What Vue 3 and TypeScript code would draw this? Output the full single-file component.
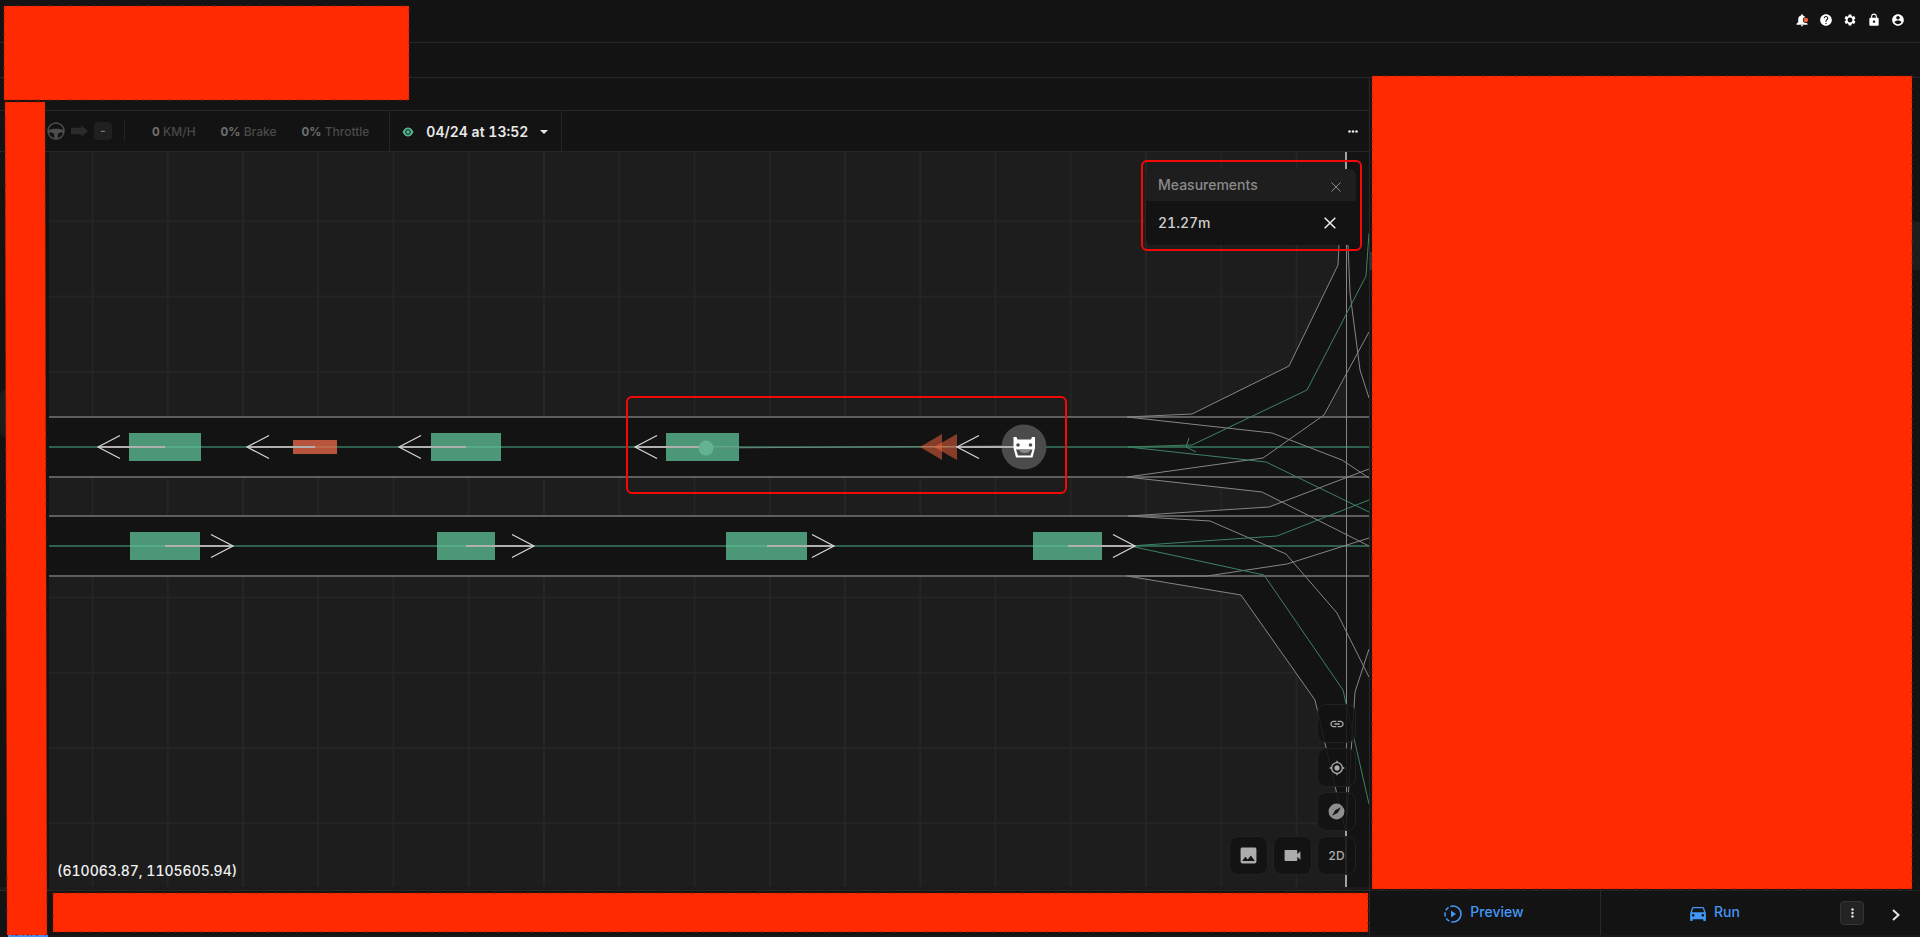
<script setup lang="ts">
interface Vehicle {
  x: number
  y: number
  width: number
  height: number
  kind: 'car' | 'cone'
  from: number
  tip: number
}

interface IconDef {
  name: string
  path: string
}

const step = 75.25
const columns: number[] = Array.from({ length: 17 }, (_, i) => 92.5 + i * step)
const rows: number[] = Array.from({ length: 9 }, (_, i) => 221.25 + i * step)

const vehicles: Vehicle[] = [
  { x: 129, y: 433, width: 72, height: 28, kind: 'car', from: 165, tip: 98 },
  { x: 293, y: 440, width: 44, height: 14, kind: 'cone', from: 315, tip: 247 },
  { x: 431, y: 433, width: 70, height: 28, kind: 'car', from: 466, tip: 399 },
  { x: 666, y: 433, width: 73, height: 28, kind: 'car', from: 702, tip: 635 },
  { x: 130, y: 532, width: 70, height: 28, kind: 'car', from: 165, tip: 233 },
  { x: 437, y: 532, width: 58, height: 28, kind: 'car', from: 466, tip: 534 },
  { x: 726, y: 532, width: 81, height: 28, kind: 'car', from: 767, tip: 834 },
  { x: 1033, y: 532, width: 69, height: 28, kind: 'car', from: 1068, tip: 1135 },
]

const arrow = (from: number, tip: number, y: number): string => {
  const back = tip < from ? tip + 22 : tip - 22
  return `M${back} ${y - 11.5}L${tip} ${y}L${back} ${y + 11.5}`
}

const laneEdges: string[] = [
  '1127,417 1192,414 1289,366 1338,265 1339,245 1343,170',
  '1127,417 1272,433 1342,460 1369,478',
  '1127,477 1263,458 1324,415 1369,332',
  '1127,477 1262,492 1369,546',
  '1128,516 1269,507 1369,469',
  '1128,516 1210,521 1286,554 1337,613 1369,677',
  '1127,576 1207,576 1287,564 1369,538',
  '1127,576 1241,595 1315,700 1345,829',
  '1347,170 1348,245 1350,293 1360,370 1369,398',
  '1369,649 1355,692 1346,830',
]

const laneCenters: string[] = [
  '1369,233 1366,276 1307,390 1192,445 1128,447',
  '1128,447 1266,462 1369,512',
  '1130,546 1277,536 1369,500',
  '1130,546 1264,575 1343,690 1369,804',
]

const account: IconDef[] = [
  { name: 'Help', path: 'M12 2C6.48 2 2 6.48 2 12s4.48 10 10 10 10-4.48 10-10S17.52 2 12 2zm1 17h-2v-2h2v2zm2.07-7.75l-.9.92C13.45 12.9 13 13.5 13 15h-2v-.5c0-1.1.45-2.1 1.17-2.83l1.24-1.26c.37-.36.59-.86.59-1.41 0-1.1-.9-2-2-2s-2 .9-2 2H8c0-2.21 1.79-4 4-4s4 1.79 4 4c0 .88-.36 1.68-.93 2.25z' },
  { name: 'Settings', path: 'M19.14 12.94c.04-.3.06-.61.06-.94 0-.32-.02-.64-.07-.94l2.03-1.58c.18-.14.23-.41.12-.61l-1.92-3.32c-.12-.22-.37-.29-.59-.22l-2.39.96c-.5-.38-1.03-.7-1.62-.94l-.36-2.54c-.04-.24-.24-.41-.48-.41h-3.84c-.24 0-.43.17-.47.41l-.36 2.54c-.59.24-1.13.57-1.62.94l-2.39-.96c-.22-.08-.47 0-.59.22L2.74 8.87c-.12.21-.08.47.12.61l2.03 1.58c-.05.3-.09.63-.09.94s.02.64.07.94l-2.03 1.58c-.18.14-.23.41-.12.61l1.92 3.32c.12.22.37.29.59.22l2.39-.96c.5.38 1.03.7 1.62.94l.36 2.54c.05.24.24.41.48.41h3.84c.24 0 .44-.17.47-.41l.36-2.54c.59-.24 1.13-.56 1.62-.94l2.39.96c.22.08.47 0 .59-.22l1.92-3.32c.12-.22.07-.47-.12-.61l-2.01-1.58zM12 16.2A4.2 4.2 0 1 1 12 7.8a4.2 4.2 0 0 1 0 8.4z' },
  { name: 'Lock', path: 'M18 8h-1V6c0-2.76-2.24-5-5-5S7 3.24 7 6v2H6c-1.1 0-2 .9-2 2v10c0 1.1.9 2 2 2h12c1.1 0 2-.9 2-2V10c0-1.1-.9-2-2-2zm-6 9c-1.1 0-2-.9-2-2s.9-2 2-2 2 .9 2 2-.9 2-2 2zm3.1-9H8.9V6c0-1.71 1.39-3.1 3.1-3.1s3.1 1.39 3.1 3.1v2z' },
  { name: 'Account', path: 'M12 2C6.48 2 2 6.48 2 12s4.48 10 10 10 10-4.48 10-10S17.52 2 12 2zm0 3c1.66 0 3 1.34 3 3s-1.34 3-3 3-3-1.34-3-3 1.34-3 3-3zm0 14.2c-2.5 0-4.71-1.28-6-3.22.03-1.99 4-3.08 6-3.08 1.99 0 5.97 1.09 6 3.08-1.29 1.94-3.5 3.22-6 3.22z' },
]

const stack: IconDef[] = [
  { name: 'Link', path: 'M3.9 12c0-1.71 1.39-3.1 3.1-3.1h4V7H7c-2.76 0-5 2.24-5 5s2.24 5 5 5h4v-1.9H7c-1.71 0-3.1-1.39-3.1-3.1zM8 13h8v-2H8v2zm9-6h-4v1.9h4c1.71 0 3.1 1.39 3.1 3.1s-1.39 3.1-3.1 3.1h-4V17h4c2.76 0 5-2.24 5-5s-2.24-5-5-5z' },
  { name: 'Center on vehicle', path: 'M12 8c-2.21 0-4 1.79-4 4s1.79 4 4 4 4-1.79 4-4-1.79-4-4-4zm8.94 3c-.46-4.17-3.77-7.48-7.94-7.94V1h-2v2.06C6.83 3.52 3.52 6.83 3.06 11H1v2h2.06c.46 4.17 3.77 7.48 7.94 7.94V23h2v-2.06c4.17-.46 7.48-3.77 7.94-7.94H23v-2h-2.06zM12 19c-3.87 0-7-3.13-7-7s3.13-7 7-7 7 3.13 7 7-3.13 7-7 7z' },
]
</script>

<template>
  <div class="app">
    <header class="topbar">
      <button class="plain" type="button" aria-label="Notifications">
        <svg class="icon-sm" viewBox="0 0 24 24"><path d="M12 23c1.1 0 2-.9 2-2h-4c0 1.1.9 2 2 2zm6.500-7V10.500c0-3.100-1.900-5.600-5-6.300V3.500a1.500 1.500 0 0 0-3 0v.7c-3.100.7-5 3.200-5 6.300V16L2.500 18.500V20h19v-1.500z" /><circle cx="18.500" cy="12" r="5" fill="#131313" /><circle cx="18.500" cy="12" r="4" class="alert" /></svg>
      </button>
      <button v-for="icon in account" :key="icon.name" class="plain" type="button" :aria-label="icon.name">
        <svg class="icon-sm" viewBox="0 0 24 24"><path fill-rule="evenodd" :d="icon.path" /></svg>
      </button>
    </header>
    <div class="subbar"></div>
    <svg class="mask mask-top"><rect width="100%" height="100%" class="mask-fill" /></svg>

    <main class="main">
      <section class="workspace">
        <div class="menubar"></div>
        <div class="toolbar">
          <div class="drive">
            <svg class="wheel" viewBox="0 0 18 18">
              <circle cx="9" cy="9" r="8" fill="none" stroke="currentColor" stroke-width="1.500" />
              <path d="M1 8.500C4 6.200 14 6.200 17 8.500L16.500 11C13 10 11 11 10.700 13V17H7.300V13C7 11 5 10 1.500 11Z" fill="currentColor" />
            </svg>
            <svg class="gear-arrow" viewBox="0 0 18 12"><path d="M0 2.500h11V0l7 6-7 6V9.500H0z" fill="#2b2b2b" /></svg>
            <span class="gear">-</span>
          </div>
          <div class="stats">
            <span><b>0</b> KM/H</span>
            <span><b>0%</b> Brake</span>
            <span><b>0%</b> Throttle</span>
          </div>
          <button class="version" type="button">
            <svg class="eye" viewBox="0 0 12 10"><path d="M0.500 5C2 1.700 4 .5 6 .5S10 1.700 11.500 5C10 8.300 8 9.500 6 9.500S2 8.300.5 5z" fill="#54b890" /><circle cx="6" cy="5" r="2.300" fill="none" stroke="#131313" stroke-width="1" /></svg>
            <span>04/24 at 13:52</span>
            <svg class="caret" viewBox="0 0 8 4"><path d="M0 0h8L4 4z" fill="#e8e8e8" /></svg>
          </button>
          <button class="plain more" type="button" aria-label="More">
            <svg class="dots" viewBox="0 0 10 3"><circle cx="1.500" cy="1.500" r="1.300" /><circle cx="5" cy="1.500" r="1.300" /><circle cx="8.500" cy="1.500" r="1.300" /></svg>
          </button>
        </div>

        <div class="stage">
          <div class="rail"></div>
          <div class="map">
            <svg class="canvas" viewBox="49 152 1320 735" preserveAspectRatio="xMinYMin slice">
              <g class="grid">
                <line v-for="x in columns" :key="'c' + x" :x1="x" :x2="x" y1="152" y2="887" />
                <line v-for="y in rows" :key="'r' + y" x1="48" x2="1369" :y1="y" :y2="y" />
              </g>
              <g class="road">
                <rect x="48" y="417" width="1080" height="60" />
                <rect x="48" y="516" width="1080" height="60" />
                <path fill-rule="evenodd" d="M1127 417L1192 414L1289 366L1338 265L1339 245L1346 170V152H1369V887H1346V829L1315 700L1241 595L1127 576V516L1269 507L1282 502L1262 492L1127 477ZM1325 415.500L1346 376V417H1325Z" />
              </g>
              <g class="edge">
                <line v-for="y in [417, 477, 516, 576]" :key="y" x1="48" x2="1369" :y1="y" :y2="y" />
              </g>
              <g class="center">
                <line x1="48" x2="1369" y1="447" y2="447" />
                <line x1="48" x2="1369" y1="546" y2="546" />
              </g>
              <g class="lane-edge">
                <polyline v-for="points in laneEdges" :key="points" :points="points" />
                <line x1="1346.500" x2="1346.500" y1="152" y2="887" />
              </g>
              <g class="lane-end">
                <line x1="1346" x2="1346" y1="152" y2="170" />
                <line x1="1346" x2="1346" y1="829" y2="887" />
              </g>
              <g class="lane-center">
                <polyline v-for="points in laneCenters" :key="points" :points="points" />
                <polyline points="1189,438 1186,447 1196,452" />
              </g>

              <g v-for="v in vehicles" :key="v.x + '-' + v.y">
                <rect :x="v.x" :y="v.y" :width="v.width" :height="v.height" :class="v.kind" />
                <line :x1="v.x" :x2="v.x + v.width" :y1="v.y + v.height / 2" :y2="v.y + v.height / 2" class="inner" :class="v.kind + '-line'" />
                <line :x1="v.from" :x2="v.tip" :y1="v.y + v.height / 2" :y2="v.y + v.height / 2" class="heading" />
                <path :d="arrow(v.from, v.tip, v.y + v.height / 2)" class="head" />
              </g>

              <line x1="706" y1="448" x2="1024" y2="446" class="measure" />
              <circle cx="706" cy="448" r="7.500" fill="#65b292" />
              <circle cx="1024" cy="447" r="22.500" fill="#4b4b4b" />
              <path d="M920 447L942 434V460Z" class="wedge" />
              <path d="M934 447L957 434V460Z" class="wedge" />
              <line x1="1024" x2="957" y1="447" y2="447" class="heading" />
              <path :d="arrow(1024, 957, 447)" class="head" />
              <path fill-rule="evenodd" fill="#fff" d="M1013.500 437h3l1 2.500h13.500l1-2.500h3v11l-2.500 9.500h-16.500l-2.500-9.500zM1016 449.500l2 6h12.500l2-6z" />
              <path d="M1019 449.500h11.500a6 5 0 0 1-11.500 0z" fill="#8b8b8b" />
              <circle cx="1018" cy="445" r="1.800" fill="#4b4b4b" />
              <circle cx="1030.500" cy="445" r="1.800" fill="#4b4b4b" />
              <rect x="627" y="397" width="439" height="96" rx="5" class="callout" />
            </svg>

            <div class="marked">
              <section class="panel">
                <div class="panel-head">
                  <span>Measurements</span>
                  <button class="plain" type="button" aria-label="Close measurements"><svg class="close-sm" viewBox="0 0 10 10"><path d="M.5.5l9 9M9.500.5l-9 9" /></svg></button>
                </div>
                <div class="panel-row">
                  <span>21.27m</span>
                  <button class="plain" type="button" aria-label="Remove measurement"><svg class="close-md" viewBox="0 0 12 12"><path d="M.7.7l10.600 10.600M11.300.7L.7 11.300" /></svg></button>
                </div>
              </section>
            </div>

            <div class="coords">(610063.87, 1105605.94)</div>

            <div class="controls">
              <button v-for="icon in stack" :key="icon.name" class="tile" type="button" :aria-label="icon.name">
                <svg class="icon-md" viewBox="0 0 24 24"><path :d="icon.path" /></svg>
              </button>
              <button class="tile" type="button" aria-label="Compass">
                <svg class="icon-lg" viewBox="0 0 24 24"><circle cx="12" cy="12" r="10" fill="#8f8f8f" /><path d="M17.500 6.500L13.700 13.700 6.500 17.500 10.300 10.300z" fill="#151515" /></svg>
              </button>
              <div class="tile-row">
                <button class="tile" type="button" aria-label="Image">
                  <svg class="icon-lg" viewBox="0 0 24 24"><path fill-rule="evenodd" d="M22 20V4c0-1.100-.9-2-2-2H4c-1.100 0-2 .9-2 2v16c0 1.100.9 2 2 2h16c1.100 0 2-.9 2-2zM8 13.500l3 3.500 4-5 5 7H4z" /></svg>
                </button>
                <button class="tile" type="button" aria-label="Camera">
                  <svg class="icon-lg" viewBox="0 0 24 24"><path d="M18 10.500V6c0-.55-.45-1-1-1H3c-.55 0-1 .45-1 1v12c0 .55.45 1 1 1h14c.55 0 1-.45 1-1v-4.500l4 4v-11z" /></svg>
                </button>
                <button class="tile" type="button">2D</button>
              </div>
            </div>
          </div>
        </div>
        <div class="timeline">
          <svg class="mask mask-timeline"><rect width="100%" height="100%" class="mask-fill" /></svg>
        </div>
        <span class="rail-tab"></span>
        <svg class="mask mask-rail" viewBox="0 0 42 833" preserveAspectRatio="none"><polygon points="0,0 40,0 42,833 2,833" class="mask-fill" /></svg>
      </section>

      <aside class="side">
        <span class="resize-handle"></span>
        <span class="side-track"></span>
        <svg class="mask mask-side"><rect width="100%" height="100%" class="mask-fill" /></svg>
        <div class="actions">
          <button class="action preview" type="button">
            <svg class="play" viewBox="0 0 18 18"><circle cx="9" cy="9" r="8" fill="none" stroke="#4397f7" stroke-width="1.600" stroke-dasharray="26 2 4.200 2 4.200 2 4.200 2 3.600" transform="rotate(-85 9 9)" /><path d="M7 5.500L12 9L7 12.500Z" /></svg>
            <span>Preview</span>
          </button>
          <button class="action run" type="button">
            <svg class="car-icon" viewBox="3 5 18 16"><path fill-rule="evenodd" d="M18.92 6.01C18.72 5.42 18.16 5 17.5 5h-11c-.66 0-1.21.42-1.42 1.01L3 12v8c0 .55.45 1 1 1h1c.55 0 1-.45 1-1v-1h12v1c0 .55.45 1 1 1h1c.55 0 1-.45 1-1v-8l-2.08-5.99zM6.5 16c-.83 0-1.5-.67-1.5-1.5S5.67 13 6.5 13s1.5.67 1.5 1.5S7.33 16 6.5 16zm11 0c-.83 0-1.5-.67-1.5-1.5s.67-1.5 1.5-1.5 1.5.67 1.5 1.5-.67 1.5-1.5 1.5zM5 11l1.500-4.500h11L19 11H5z" /></svg>
            <span>Run</span>
          </button>
          <button class="kebab" type="button" aria-label="Run options">
            <svg viewBox="0 0 3 10"><circle cx="1.500" cy="1.500" r="1.200" /><circle cx="1.500" cy="5" r="1.200" /><circle cx="1.500" cy="8.500" r="1.200" /></svg>
          </button>
          <button class="plain next" type="button" aria-label="Next">
            <svg viewBox="0 0 8 12"><path d="M1 1l5.500 5L1 11" fill="none" stroke="#e4e4e4" stroke-width="2" /></svg>
          </button>
        </div>
      </aside>
    </main>
    <footer class="base"><span class="base-tab"></span></footer>
  </div>
</template>

<style>
body {
  margin: 0;
  background: #131313;
}
</style>

<style scoped>
.app {
  position: relative;
  display: flex;
  flex-direction: column;
  min-height: 100vh;
  box-sizing: border-box;
  background: #131313;
  color: #e8e8e8;
  font: 14px/20px Inter, "Liberation Sans", sans-serif;
  font-variant-numeric: tabular-nums;
}
.app * {
  box-sizing: border-box;
}
svg {
  display: block;
  fill: currentColor;
}
button {
  font: inherit;
  font-variant-numeric: tabular-nums;
  color: inherit;
  cursor: pointer;
}
.plain {
  padding: 0;
  border: 0;
  background: none;
}
.topbar {
  display: flex;
  align-items: center;
  justify-content: flex-end;
  gap: 10px;
  height: 43px;
  padding: 0 15px 2px 0;
  border-bottom: 1px solid #262626;
  color: #fff;
}
.icon-sm {
  width: 14px;
  height: 14px;
}
.alert {
  fill: #f2643d;
}
.subbar {
  height: 35px;
  border-bottom: 1px solid #262626;
}
.mask {
  overflow: visible;
}
.mask-fill {
  fill: #ff2a00;
  stroke: #8a1c06;
  stroke-width: 1;
  stroke-dasharray: 2 3 1 5 3 2 1 7 2 4 1 2;
}
.mask-top {
  position: absolute;
  z-index: 2;
  top: 6px;
  left: 4px;
  width: 405px;
  height: 94px;
}
.main {
  display: flex;
  flex: 1;
}
.workspace {
  position: relative;
  display: flex;
  flex: 1;
  flex-direction: column;
  min-width: 0;
}
.menubar {
  height: 33px;
  border-bottom: 1px solid #262626;
}
.toolbar {
  display: flex;
  align-items: center;
  height: 41px;
  padding-left: 47px;
  border-bottom: 1px solid #262626;
}
.drive {
  display: flex;
  align-items: center;
  gap: 6px;
  height: 20px;
  padding-right: 12px;
  border-right: 1px solid #242424;
  color: #4d4d4d;
}
.wheel {
  width: 18px;
  height: 18px;
}
.gear-arrow {
  width: 17px;
  height: 12px;
}
.gear {
  width: 18px;
  height: 18px;
  border-radius: 4px;
  background: #202020;
  color: #777;
  font-size: 12px;
  font-weight: 600;
  line-height: 18px;
  text-align: center;
}
.stats {
  display: flex;
  gap: 25px;
  padding: 1px 20px 0 27px;
  color: #4a4a4a;
  font-size: 12px;
  font-weight: 500;
}
.stats b {
  color: #6e6e6e;
  font-weight: 700;
}
.version {
  display: flex;
  align-items: center;
  gap: 12px;
  height: 40px;
  padding: 1px 13px 0 12px;
  border: solid #262626;
  border-width: 0 1px;
  background: none;
  color: #e8e8e8;
  font-weight: 600;
}
.eye {
  width: 12px;
  height: 10px;
}
.caret {
  width: 8px;
  height: 4px;
}
.more {
  margin-left: auto;
  padding: 8px 11px;
}
.dots {
  width: 10px;
  height: 3px;
}
.stage {
  display: flex;
  flex: 1;
}
.rail {
  width: 49px;
}
.rail-tab {
  position: absolute;
  top: 312px;
  left: 0;
  width: 6px;
  height: 47px;
  border-radius: 6px 0 0 6px;
  background: #1d1d1d;
}
.map {
  position: relative;
  flex: 1;
  overflow: hidden;
  background: #1d1d1d;
}
.canvas {
  position: absolute;
  inset: 0;
  width: 100%;
  height: 100%;
}
.grid line {
  stroke: #252525;
  stroke-width: 2;
}
.road {
  fill: #131313;
}
.edge line {
  stroke: #5e5e5e;
  stroke-width: 2;
}
.center line {
  stroke: #2f604b;
  stroke-width: 2;
}
.lane-edge {
  fill: none;
  stroke: #868686;
  stroke-width: 1;
}
.lane-end {
  stroke: #a2a2a2;
  stroke-width: 2;
}
.lane-center {
  fill: none;
  stroke: #3d8265;
  stroke-width: 1;
}
.car {
  fill: #4b9778;
}
.cone {
  fill: #b9543c;
}
.inner {
  stroke-width: 2;
}
.car-line {
  stroke: #55ab88;
}
.cone-line {
  stroke: #bc694c;
}
.heading {
  stroke: #b0b0b0;
  stroke-width: 2;
}
.head {
  fill: none;
  stroke: #d8d8d8;
  stroke-width: 1.2;
}
.measure {
  stroke: #6b8a7d;
}
.wedge {
  fill: #f2643d;
  fill-opacity: 0.53;
}
.callout {
  fill: none;
  stroke: #f50808;
  stroke-width: 2;
}
.marked {
  position: absolute;
  top: 8px;
  right: 7px;
  width: 221px;
  padding: 7px 4px 4px 3px;
  border: 2px solid #f50808;
  border-radius: 6px;
}
.panel {
  overflow: hidden;
  border-radius: 6px;
  background: #131313;
}
.panel-head,
.panel-row {
  display: flex;
  align-items: center;
  justify-content: space-between;
  padding: 0 15px 0 12px;
  color: #8a8a8a;
  font-weight: 500;
}
.panel-head {
  height: 32px;
  background: #1e1e1e;
}
.panel-row {
  height: 44px;
  padding-right: 20px;
  color: #d0d0d0;
}
.close-sm,
.close-md {
  fill: none;
  stroke: currentColor;
}
.close-sm {
  width: 10px;
  height: 10px;
  margin-top: 3px;
}
.close-md {
  width: 12px;
  height: 12px;
  stroke: #eee;
  stroke-width: 1.5;
}
.coords {
  position: absolute;
  bottom: 6px;
  left: 8px;
  color: #f0f0f0;
  font-weight: 500;
}
.controls {
  position: absolute;
  right: 13px;
  bottom: 12px;
  display: flex;
  flex-direction: column;
  align-items: flex-end;
  gap: 5px;
}
.tile-row {
  display: flex;
  gap: 5px;
}
.tile {
  display: flex;
  align-items: center;
  justify-content: center;
  width: 39px;
  height: 39px;
  padding: 0;
  border: 1px solid #222;
  border-radius: 9px;
  background: rgba(18, 18, 18, 0.88);
  color: #acacac;
  font-size: 12px;
  font-weight: 500;
}
.icon-md {
  width: 16px;
  height: 16px;
}
.icon-lg {
  width: 19px;
  height: 19px;
}
.timeline {
  height: 48px;
  padding: 5px 1px 0 53px;
  border-top: 3px solid #1b1b1b;
  box-shadow: inset 0 1px #292929;
}
.mask-timeline {
  width: 100%;
  height: 39px;
  margin-top: -2px;
}
.mask-rail {
  position: absolute;
  top: 24px;
  bottom: 0;
  left: 5px;
  width: 42px;
  height: calc(100% - 24px);
}
.side {
  position: relative;
  display: flex;
  flex: 0 0 551px;
  flex-direction: column;
  border-left: 1px solid #292929;
}
.resize-handle {
  position: absolute;
  top: 174px;
  left: 0;
  width: 3px;
  height: 18px;
  background: #333;
}
.side-track {
  position: absolute;
  top: 144px;
  right: 0;
  width: 8px;
  height: 48px;
  background: #1d1d1d;
}
.mask-side {
  position: relative;
  flex: 1;
  width: 540px;
  margin: -2px 0 1px 2px;
}
.actions {
  display: flex;
  align-items: center;
  height: 45px;
  border-top: 1px solid #222;
}
.action {
  display: flex;
  align-items: center;
  justify-content: center;
  gap: 8px;
  height: 44px;
  padding: 0 0 3px;
  border: 0;
  background: none;
  color: #4397f7;
  font-weight: 500;
}
.preview {
  width: 231px;
  border-right: 1px solid #292929;
  padding-right: 2px;
}
.run {
  flex: 1;
  padding-right: 11px;
}
.play {
  width: 18px;
  height: 18px;
}
.car-icon {
  width: 16px;
  height: 14px;
}
.action svg {
  margin-top: 4px;
}
.kebab {
  display: flex;
  align-items: center;
  justify-content: center;
  width: 24px;
  height: 24px;
  padding: 0;
  border: 1px solid #333;
  border-radius: 4px;
  background: #232323;
}
.kebab svg {
  width: 3px;
  height: 10px;
}
.next {
  margin: 4px 20px 0 28px;
}
.next svg {
  width: 8px;
  height: 12px;
}
.base {
  height: 2px;
  padding-left: 8px;
  background: #1c181a;
}
.base-tab {
  display: block;
  width: 40px;
  height: 2px;
  background: #4a8cf0;
}
</style>
